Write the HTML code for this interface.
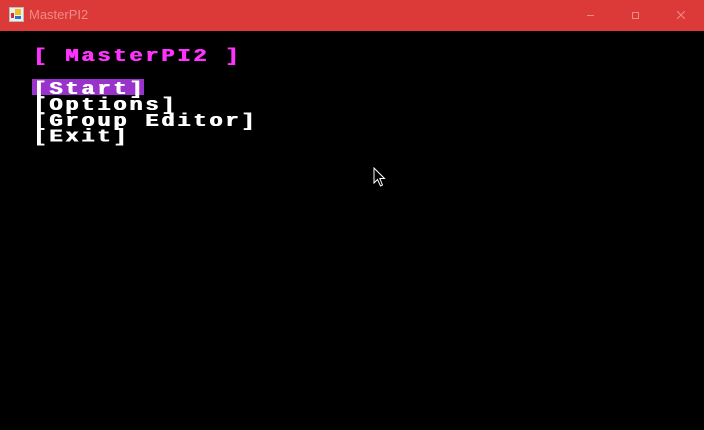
<!DOCTYPE html>
<html><head><meta charset="utf-8"><style>
html,body{margin:0;padding:0;width:704px;height:430px;background:#000;overflow:hidden;position:relative}
.tb{position:absolute;left:0;top:0;width:704px;height:31px;background:#dc3a38}
.tt{position:absolute;left:29px;top:7px;font:13px "Liberation Sans",sans-serif;color:#f08a88}
.t{position:absolute;font:bold 22px/18.8px "Liberation Mono",monospace;letter-spacing:2.8px;white-space:pre;transform:scaleY(0.85);transform-origin:0 0}
.w{text-shadow:1px 0 0 #fff}
.m{text-shadow:1px 0 0 #ff33ff}
.hl{position:absolute;left:32px;top:79px;width:112px;height:16px;background:#9933cc}
</style></head><body>
<div class="tb">
<svg style="position:absolute;left:9px;top:7px" width="15" height="15"><rect x="0" y="0" width="15" height="15" fill="#bbb"/><rect x="1" y="1" width="13" height="13" fill="#eee"/><rect x="6" y="2" width="6" height="6" fill="#f0c020"/><rect x="2" y="6" width="3" height="5" fill="#d03030"/><rect x="6" y="9" width="6" height="3" fill="#3070d0"/></svg>
<div class="tt">MasterPI2</div>
<div style="position:absolute;left:587px;top:15px;width:7px;height:1px;background:#f08a88"></div>
<div style="position:absolute;left:632px;top:12px;width:5px;height:5px;border:1px solid #f08a88"></div>
<svg style="position:absolute;left:677px;top:11px" width="8" height="8"><path d="M0 0L8 8M8 0L0 8" stroke="#f08a88" stroke-width="1"/></svg>
</div>
<div class="t m" style="left:33px;top:48.5px;color:#ff33ff">[ MasterPI2 ]</div>
<div class="hl"></div>
<div class="t w" style="left:33px;top:81.5px;color:#fff">[Start]
[Options]
[Group Editor]
[Exit]</div>
<svg style="position:absolute;left:373px;top:167px" width="14" height="22"><path d="M1 1L1 16L4.5 12.5L7.5 19L9.5 18L6.8 11.5L11.5 11.5Z" fill="#000" stroke="#fff" stroke-width="1"/></svg>
</body></html>
